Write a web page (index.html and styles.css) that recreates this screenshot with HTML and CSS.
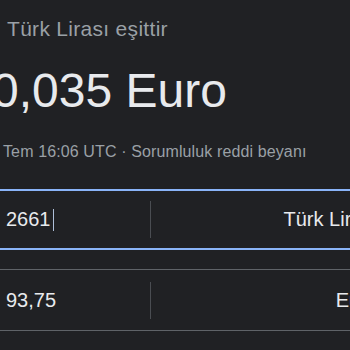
FILE: index.html
```html
<!DOCTYPE html>
<html lang="tr">
<head>
<meta charset="utf-8">
<link rel="stylesheet" href="styles.css">
</head>
<body>
<div class="page">
  <div class="source">Türk Lirası eşittir</div>
  <div class="result">0,035 Euro</div>
  <div class="meta">Tem 16:06 UTC · Sorumluluk reddi beyanı</div>
  <div class="field focused">
    <div class="amount">2661<span class="caret"></span></div>
    <div class="divider"></div>
    <div class="unit">Türk Lirası</div>
  </div>
  <div class="field">
    <div class="amount">93,75</div>
    <div class="divider"></div>
    <div class="unit">Euro</div>
  </div>
</div>
</body>
</html>
```
FILE: styles.css
```css
html, body {
  margin: 0;
  padding: 0;
  overflow: hidden;
  background: #202124;
}
body {
  font-family: "Liberation Sans", Arial, sans-serif;
  width: 350px;
  height: 350px;
}
.page {
  padding-top: 16px;
}
.source {
  font-size: 21px;
  line-height: 25px;
  letter-spacing: 0.3px;
  color: #9aa0a6;
  padding-left: 7px;
  white-space: nowrap;
}
.result {
  margin-top: 22px;
  margin-left: -8px;
  font-size: 48px;
  line-height: 56px;
  color: #e8eaed;
  white-space: nowrap;
}
.meta {
  margin-top: 23px;
  font-size: 16px;
  line-height: 20px;
  letter-spacing: 0.12px;
  color: #9aa0a6;
  padding-left: 3px;
  white-space: nowrap;
}
.field {
  display: flex;
  align-items: center;
  margin: 27px -60px 0 -10px;
  height: 60px;
  border-top: 1px solid #5f6368;
  border-bottom: 1px solid #5f6368;
  font-size: 20px;
  color: #e8eaed;
  white-space: nowrap;
}
.field.focused {
  height: 57px;
  border-top: 2px solid #8ab4f8;
  border-bottom: 2px solid #8ab4f8;
}
.field + .field {
  margin-top: 19px;
}
.amount {
  width: 144px;
  padding-left: 16px;
  display: flex;
  align-items: center;
}
.caret {
  display: inline-block;
  width: 1px;
  height: 22px;
  margin-left: 2px;
  background: #aebfd9;
}
.divider {
  width: 1px;
  height: 37px;
  background: #4a4d52;
}
.unit {
  flex: 1;
  text-align: right;
  padding-right: 32px;
}
```
